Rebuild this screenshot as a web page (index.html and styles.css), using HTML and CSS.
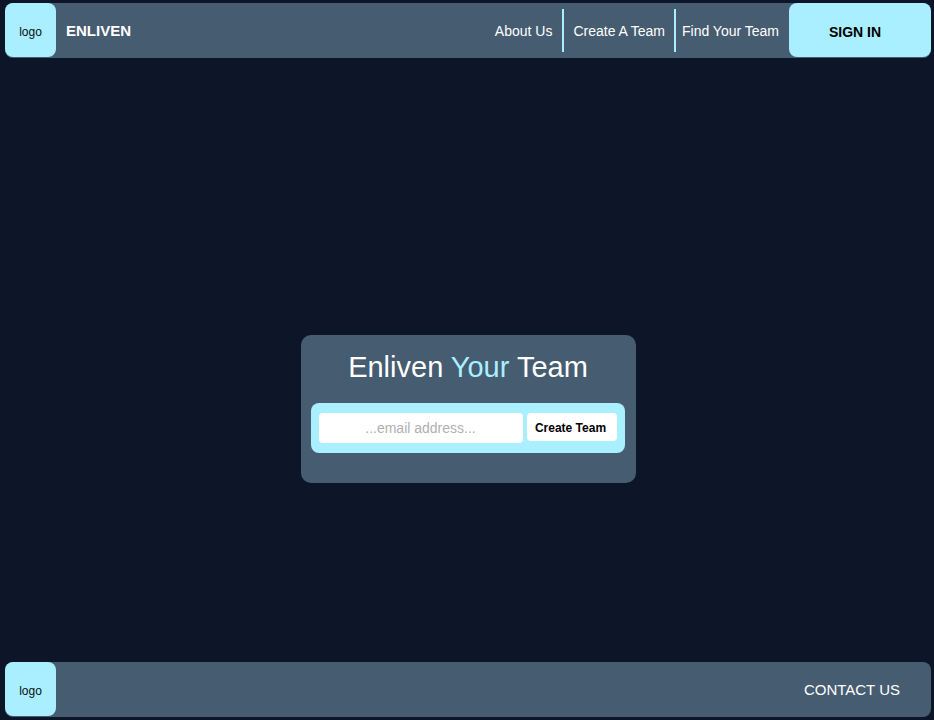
FILE: index.html
```
<!DOCTYPE html>
<html lang="en">
<head>
<meta charset="utf-8">
<meta name="viewport" content="width=device-width, initial-scale=1">
<title>Enliven</title>
<link rel="stylesheet" href="styles.css">
</head>
<body>
<header class="bar">
  <a class="logo" href="#">logo</a>
  <span class="brand">ENLIVEN</span>
  <nav class="nav">
    <a class="nav-link about" href="#about">About Us</a>
    <a class="nav-link create" href="#create">Create A Team</a>
    <a class="nav-link find" href="#find">Find Your Team</a>
  </nav>
  <button class="sign-in" type="button">SIGN IN</button>
</header>
<main class="main">
  <section class="card">
    <h1 class="title">Enliven <span class="accent">Your</span> Team</h1>
    <form class="signup">
      <input class="email" type="email" aria-label="Email address" placeholder="...email address...">
      <button class="submit" type="button">Create Team</button>
    </form>
  </section>
</main>
<footer class="bar">
  <a class="logo" href="#">logo</a>
  <a class="contact" href="#contact">CONTACT US</a>
</footer>
</body>
</html>
```
FILE: styles.css
```
* {
  box-sizing: border-box;
}

body {
  display: flex;
  flex-direction: column;
  min-height: 100vh;
  margin: 0;
  padding: 3px 3px 3px 5px;
  background: #0d1628;
  color: #fff;
  font-family: "Liberation Sans", Arial, sans-serif;
  font-size: 14px;
}

a {
  color: inherit;
  text-decoration: none;
}

button,
input {
  border: 0;
  font-family: inherit;
}

.bar {
  display: flex;
  align-items: center;
  height: 55px;
  border-radius: 8px;
  background: #465c70;
}

.logo {
  display: flex;
  align-items: center;
  justify-content: center;
  align-self: flex-start;
  width: 51px;
  height: 54px;
  padding-top: 3px;
  border-radius: 8px;
  background: #a9efff;
  color: #0a0f14;
  font-size: 12px;
}

.brand {
  margin-left: 10px;
  font-size: 15px;
  font-weight: bold;
}

.nav {
  display: flex;
  margin-left: auto;
}

.nav-link {
  display: flex;
  align-items: center;
  height: 43px;
  white-space: nowrap;
}

.about {
  padding-right: 10px;
  border-right: 2px solid #a9efff;
}

.create {
  padding: 0 9px;
  border-right: 2px solid #a9efff;
}

.find {
  padding: 0 10px 0 6px;
}

.sign-in {
  align-self: flex-start;
  width: 142px;
  height: 54px;
  padding: 4px 10px 0 0;
  border-radius: 8px;
  background: #a9efff;
  color: #000;
  font-size: 14px;
  font-weight: bold;
}

.main {
  display: flex;
  flex: 1;
  align-items: center;
  justify-content: center;
  padding-top: 98px;
}

.card {
  width: 335px;
  padding: 14px 11px 30px 10px;
  border-radius: 10px;
  background: #465c70;
}

.title {
  margin: 0 0 18px;
  padding-left: 1px;
  font-size: 29px;
  font-weight: normal;
  line-height: 36px;
  text-align: center;
}

.accent {
  color: #a9efff;
}

.signup {
  display: flex;
  align-items: flex-start;
  gap: 4px;
  padding: 10px 8px;
  border-radius: 8px;
  background: #a9efff;
}

.email {
  flex: 1;
  min-width: 0;
  height: 30px;
  padding: 0;
  border-radius: 4px;
  background: #fff;
  color: #000;
  font-size: 14px;
  text-align: center;
}

.email::placeholder {
  color: #b0b0b0;
}

.submit {
  width: 90px;
  height: 28px;
  padding: 2px 2px 0 0;
  border-radius: 4px;
  background: #fff;
  color: #000;
  font-size: 12px;
  font-weight: bold;
  white-space: nowrap;
}

.contact {
  margin: 0 31px 0 auto;
  font-size: 15px;
}
```
